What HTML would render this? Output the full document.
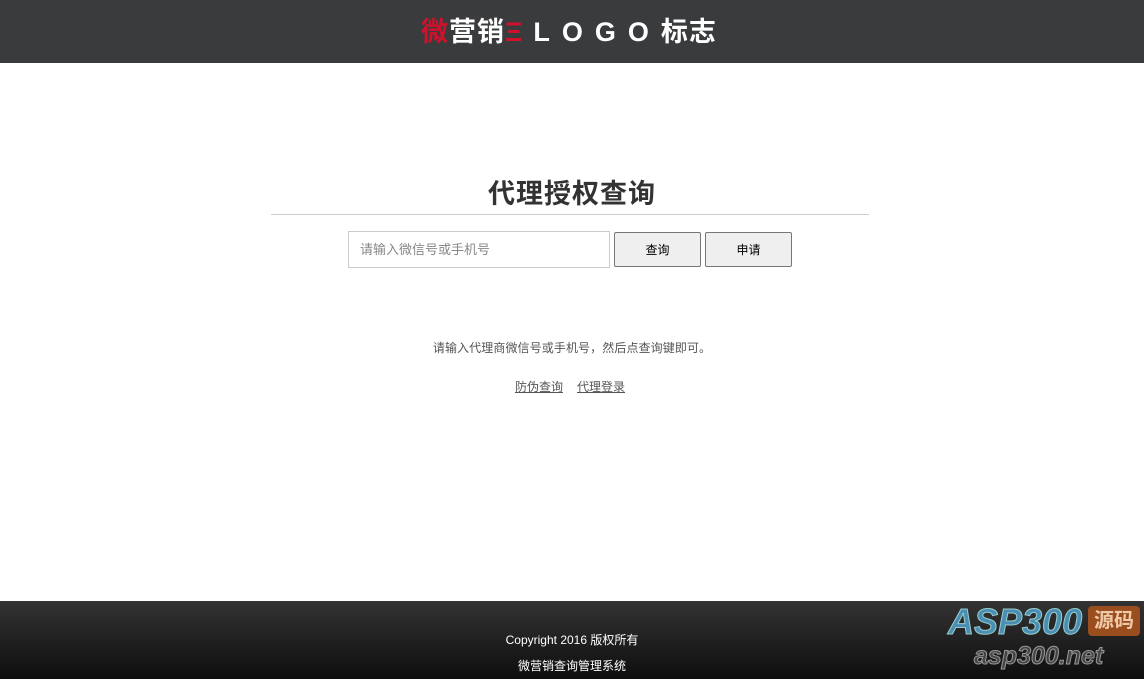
<!DOCTYPE html>
<html><head><meta charset="utf-8"><style>
*{margin:0;padding:0;box-sizing:border-box}
body{width:1144px;height:679px;background:#fff;font-family:"Liberation Sans","Noto Sans CJK SC",sans-serif;position:relative;overflow:hidden}
.hd{position:absolute;left:0;top:0;width:1144px;height:63px;background:#3a3b3d}
.logo{position:absolute;left:421px;top:14px;font-size:27px;font-weight:bold;color:#fff;letter-spacing:1px;white-space:nowrap;line-height:36px}
.logo .r{color:#d0112b}
.logo .l{letter-spacing:12px;margin-left:10px}
h1{position:absolute;left:0;width:1144px;top:176px;text-align:center;font-size:27px;color:#333;font-weight:bold;line-height:36px;letter-spacing:1px}
.hr{position:absolute;left:271px;top:214px;width:598px;height:1px;background:#ccc}
.inp{position:absolute;left:348px;top:231px;width:262px;height:37px;border:1px solid #ccc;font-size:13px;color:#888;padding-left:11px;line-height:35px}
.btn{position:absolute;top:232px;width:87px;height:35px;border:1px solid #777;border-radius:2px;background:#efefef;font-size:12px;text-align:center;line-height:34px;color:#000}
.tip{position:absolute;left:0;width:1144px;top:339px;text-align:center;font-size:12px;color:#555;letter-spacing:0.1px}
.lk{position:absolute;top:378px;font-size:12px;color:#555;text-decoration:underline}
.ft{position:absolute;left:0;top:601px;width:1144px;height:78px;background:linear-gradient(#333,#0e0e0e)}
.ft p{position:absolute;left:0;width:1144px;text-align:center;color:#fff;font-size:12px}
.asp{position:absolute;left:948px;top:601px;font-size:36px;font-style:italic;font-weight:bold;color:#4a8fb3;-webkit-text-stroke:1px #9cc;letter-spacing:0px}
.ym{position:absolute;left:1088px;top:606px;width:52px;height:30px;background:#9a4e1e;border-radius:4px;color:#f0c9a8;font-size:20px;font-weight:bold;text-align:center;line-height:30px}
.net{position:absolute;left:974px;top:642px;font-size:25px;font-style:italic;font-weight:bold;color:#444;-webkit-text-stroke:1px #999}
</style></head><body>
<div class="hd"><div class="logo"><span class="r">微</span>营销<span class="r">Ξ</span><span class="l">LOGO</span>标志</div></div>
<h1>代理授权查询</h1>
<div class="hr"></div>
<div class="inp">请输入微信号或手机号</div>
<div class="btn" style="left:614px">查询</div>
<div class="btn" style="left:705px">申请</div>
<div class="tip">请输入代理商微信号或手机号，然后点查询键即可。</div>
<div class="lk" style="left:515px">防伪查询</div>
<div class="lk" style="left:577px">代理登录</div>
<div class="ft">
<p style="top:30px">Copyright 2016 版权所有</p>
<p style="top:56px">微营销查询管理系统</p>
</div>
<div class="asp">ASP300</div>
<div class="ym">源码</div>
<div class="net">asp300.net</div>
</body></html>
